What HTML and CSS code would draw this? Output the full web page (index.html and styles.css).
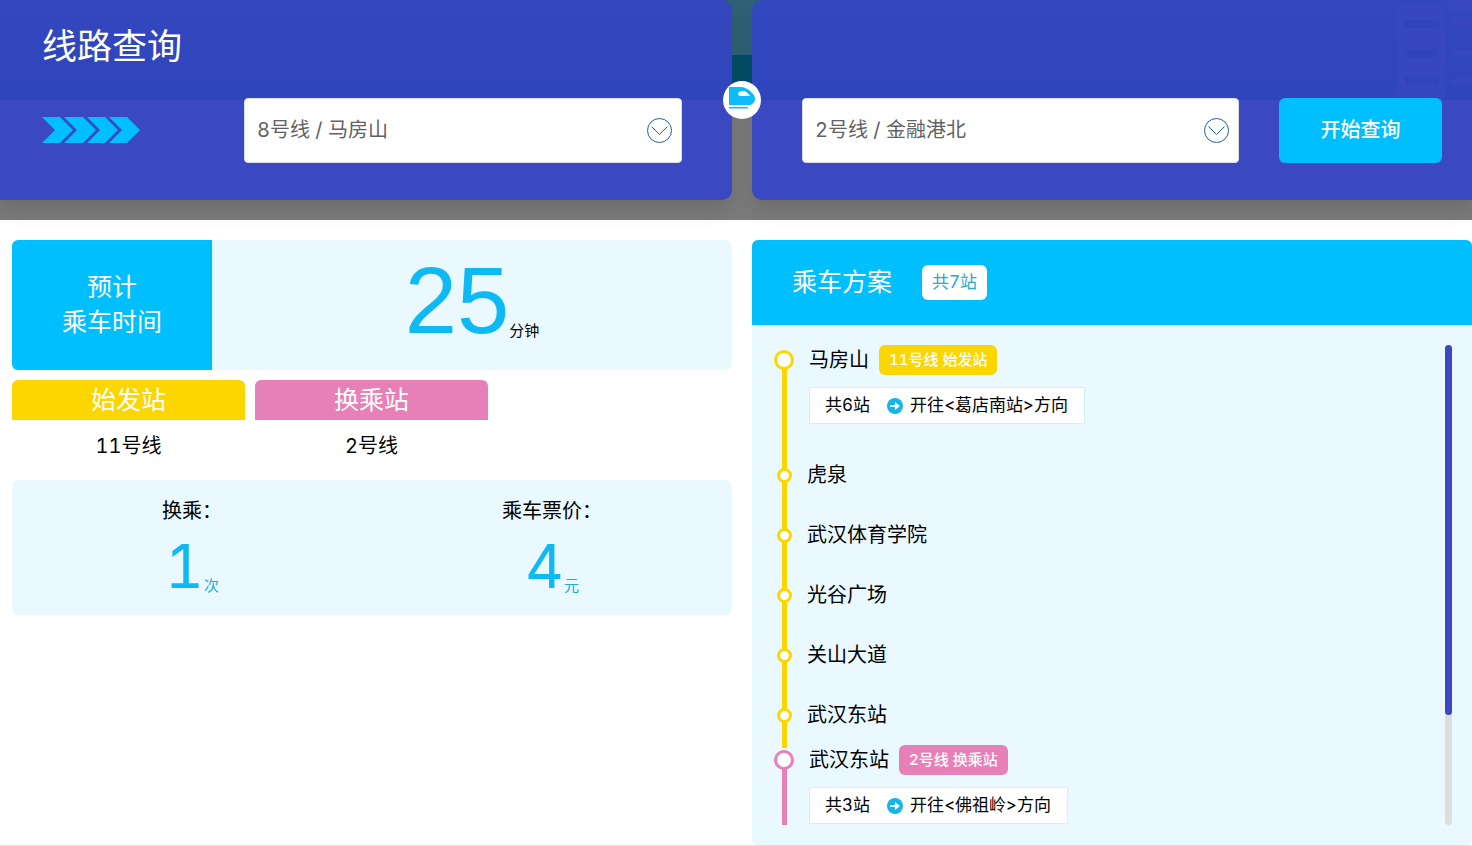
FILE: index.html
```html
<!DOCTYPE html>
<html lang="zh-CN">

<head>
    <meta charset="UTF-8">
    <meta name="viewport" content="width=device-width, initial-scale=1.0">
    <title>线路查询</title>
    <link rel="stylesheet" href="styles.css">
</head>

<body>
    <form class="query">
        <div class="query-panel query-from">
            <h1>线路查询</h1>
            <div class="query-row">
                <svg class="arrows" viewBox="0 0 98 27" aria-hidden="true">
                    <path d="M0 0h18l13 13-13 13H0l13-13zM22 0h19l13 13-13 13H22l13-13zM45 0h18l13 13-13 13H45l13-13zM67 0h18l13 13-13 13H67l13-13z" />
                </svg>
                <div class="station">
                    <select id="from" aria-label="起点站">
                        <option>8号线 / 马房山</option>
                    </select>
                    <svg class="chevron" viewBox="0 0 25 25" aria-hidden="true">
                        <circle cx="12.500" cy="12.500" r="12" />
                        <path d="M4.500 8.500l8 8 8-8" />
                    </svg>
                </div>
            </div>
        </div>
        <div class="query-panel query-to">
            <svg class="skyline" viewBox="0 0 75 100" aria-hidden="true">
                <path class="tower" d="M0 5h48v95H0zM52 0h23v12H52z" />
                <path class="window" d="M8 20h34v8H8zM8 49h34v8H8zM8 77h34v8H8z" />
                <path class="tower" d="M56 18h19v6H56zM56 50h19v6H56zM56 78h19v6H56z" />
            </svg>
            <span class="train">
                <svg viewBox="0 0 26 24" aria-hidden="true">
                    <path class="body" d="M0 1h12c6 0 14 7 14 11.500 0 4-3 6.500-6 6.500H0z" />
                    <path class="glass" d="M9 8c0-2 2-3 5-3 3 0 5 2 7 5h-9c-2 0-3-1-3-2z" />
                    <path class="body" d="M0 21h19v1.500H0z" />
                </svg>
            </span>
            <div class="query-row">
                <div class="station">
                    <select id="to" aria-label="终点站">
                        <option>2号线 / 金融港北</option>
                    </select>
                    <svg class="chevron" viewBox="0 0 25 25" aria-hidden="true">
                        <circle cx="12.500" cy="12.500" r="12" />
                        <path d="M4.500 8.500l8 8 8-8" />
                    </svg>
                </div>
                <button type="button" class="search">开始查询</button>
            </div>
        </div>
    </form>

    <main class="result">
        <section class="summary">
            <div class="time">
                <h2>预计<br>乘车时间</h2>
                <p class="time-value"><span class="number">25</span><span class="unit">分钟</span></p>
            </div>
            <div class="lines">
                <div class="line">
                    <h3 class="start">始发站</h3>
                    <p>11号线</p>
                </div>
                <div class="line">
                    <h3 class="change">换乘站</h3>
                    <p>2号线</p>
                </div>
            </div>
            <div class="totals">
                <div class="total">
                    <h3>换乘：</h3>
                    <p><span class="number">1</span><span class="unit">次</span></p>
                </div>
                <div class="total">
                    <h3>乘车票价：</h3>
                    <p><span class="number">4</span><span class="unit">元</span></p>
                </div>
            </div>
        </section>

        <section class="plan">
            <header class="plan-head">
                <h2>乘车方案</h2>
                <span class="count">共7站</span>
            </header>
            <div class="plan-body">
                <div class="route">
                    <div class="segment segment-start">
                        <div class="stop stop-main">
                            <i class="dot"></i>
                            <span class="name">马房山</span>
                            <span class="tag">11号线 始发站</span>
                        </div>
                        <p class="direction">
                            <span>共6站</span>
                            <svg viewBox="0 0 16 16" aria-hidden="true">
                                <circle cx="8" cy="8" r="8" />
                                <path d="M3 7h5V4l5 4-5 4V9H3z" />
                            </svg>
                            <span>开往&lt;葛店南站&gt;方向</span>
                        </p>
                        <ul>
                            <li class="stop"><i class="dot"></i>虎泉</li>
                            <li class="stop"><i class="dot"></i>武汉体育学院</li>
                            <li class="stop"><i class="dot"></i>光谷广场</li>
                            <li class="stop"><i class="dot"></i>关山大道</li>
                            <li class="stop"><i class="dot"></i>武汉东站</li>
                        </ul>
                    </div>
                    <div class="segment segment-change">
                        <div class="stop stop-main">
                            <i class="dot"></i>
                            <span class="name">武汉东站</span>
                            <span class="tag">2号线 换乘站</span>
                        </div>
                        <p class="direction">
                            <span>共3站</span>
                            <svg viewBox="0 0 16 16" aria-hidden="true">
                                <circle cx="8" cy="8" r="8" />
                                <path d="M3 7h5V4l5 4-5 4V9H3z" />
                            </svg>
                            <span>开往&lt;佛祖岭&gt;方向</span>
                        </p>
                    </div>
                </div>
                <div class="scrollbar"><div class="thumb"></div></div>
            </div>
        </section>
    </main>
</body>

</html>
```
FILE: styles.css
```css
* {
    box-sizing: border-box;
}

body {
    margin: 0;
    background: #fff;
    color: #000;
    font-family: Inter, "Noto Sans CJK SC", sans-serif;
    font-size: 20px;
    font-variant-numeric: tabular-nums;
    line-height: 31px;
}

h1,
h2,
h3,
p,
ul {
    margin: 0;
    padding: 0;
    font-weight: normal;
    list-style: none;
}

/* search area */
.query {
    display: grid;
    grid-template-columns: 1fr 1fr;
    gap: 20px;
    padding: 0 0 20px 12px;
    background: linear-gradient(#2f6277 0, #2f6277 55px, #004f68 55px, #004f68 100px, #7b7b7b 100px);
}

.query-panel {
    position: relative;
    display: flex;
    flex-direction: column;
    height: 200px;
    background: linear-gradient(#3347bf 0, #2f45bb 100px, #3a49c1 100px);
    box-shadow: 0 10px 20px rgba(0, 0, 0, 0.12);
}

.query-from {
    margin-left: -12px;
    padding: 21px 50px 37px 42px;
    border-radius: 0 10px 10px 0;
}

.query-to {
    padding: 21px 30px 37px 50px;
    border-radius: 10px 0 0 10px;
}

.query h1 {
    color: #fff;
    font-size: 35px;
    line-height: 50px;
}

.query-row {
    display: flex;
    align-items: center;
    gap: 40px;
    margin-top: auto;
}

.arrows {
    width: 98px;
    height: 27px;
    margin-right: 64px;
    fill: #00bfff;
}

.station {
    position: relative;
    flex: 1;
}

.station select {
    display: block;
    width: 100%;
    height: 65px;
    padding: 0 50px 0 12px;
    border: 1px solid #dcdfe6;
    border-radius: 4px;
    background: #fff;
    color: #606266;
    font: inherit;
    appearance: none;
}

.chevron {
    position: absolute;
    top: 20px;
    right: 10px;
    width: 25px;
    height: 25px;
    fill: none;
    stroke: #1f6394;
    pointer-events: none;
}

.search {
    width: 163px;
    height: 65px;
    padding: 0;
    border: 0;
    border-radius: 6px;
    background: #00bfff;
    color: #fff;
    font: inherit;
    font-weight: 500;
    cursor: pointer;
}

.train {
    position: absolute;
    top: 81px;
    left: -29px;
    z-index: 1;
    display: flex;
    align-items: center;
    justify-content: center;
    width: 38px;
    height: 38px;
    padding-bottom: 4px;
    border-radius: 50%;
    background: #fff;
}

.train svg {
    width: 26px;
    height: 24px;
}

.train .body {
    fill: #0bbcf8;
}

.train .glass {
    fill: #fff;
}

.skyline {
    position: absolute;
    top: 0;
    right: 0;
    width: 75px;
    height: 100px;
    opacity: 0.6;
}

/* keep the fields above the skyline */
.query-to .query-row {
    z-index: 1;
}

.skyline .tower {
    fill: #3a49c1;
}

.skyline .window {
    fill: #2f45b8;
}

/* result area */
.result {
    display: grid;
    grid-template-columns: 1fr 1fr;
    gap: 20px;
    padding: 20px 0 0 12px;
    border-bottom: 1px solid #ddd;
}

.time {
    display: flex;
    height: 130px;
    border-radius: 6px;
    background: #e9f9ff;
    overflow: hidden;
}

.time h2 {
    width: 200px;
    padding-top: 30px;
    background: #00bfff;
    color: #fff;
    font-size: 25px;
    line-height: 35px;
    text-align: center;
}

.time-value {
    display: flex;
    flex: 1;
    align-items: flex-end;
    justify-content: center;
    padding-bottom: 29px;
}

.number {
    color: #0fb9f3;
}

.unit {
    font-size: 15px;
    line-height: 20px;
}

.time .number {
    font-family: "Liberation Sans", sans-serif;
    font-size: 94px;
    line-height: 80px;
}

.lines {
    display: flex;
    gap: 10px;
    margin-top: 10px;
}

.line {
    width: 233px;
    text-align: center;
}

.line h3 {
    border-radius: 6px 6px 0 0;
    color: #fff;
    font-size: 25px;
    line-height: 40px;
}

.line p {
    line-height: 52px;
}

.start {
    background: #fbd600;
}

.change {
    background: #e880b8;
}

.totals {
    display: flex;
    height: 135px;
    margin-top: 8px;
    padding-top: 11px;
    border-radius: 6px;
    background: #e9f9ff;
}

.total {
    flex: 1;
    text-align: center;
}

.total h3 {
    font-size: 20px;
    line-height: 40px;
}

.total p {
    display: flex;
    align-items: flex-end;
    justify-content: center;
    height: 65px;
}

.total .number {
    font-size: 60px;
    line-height: 60px;
}

.total .unit {
    color: #22aecb;
}

/* route plan */
.plan {
    border-radius: 6px;
    background: #e9f9ff;
    overflow: hidden;
}

.plan-head {
    display: flex;
    align-items: center;
    gap: 30px;
    height: 85px;
    padding: 0 40px;
    background: #00bfff;
}

.plan-head h2 {
    color: #fff;
    font-size: 25px;
    line-height: 35px;
}

.count {
    padding: 0 10px;
    border-radius: 6px;
    background: #fff;
    color: #22aecb;
    font-size: 17px;
    line-height: 35px;
}

.plan-body {
    display: flex;
    height: 520px;
    padding: 20px;
}

.route {
    flex: 1;
    overflow: hidden;
}

.segment {
    --line-color: #fbd600;
    background: linear-gradient(var(--line-color), var(--line-color)) 10px 15px / 5px 100% no-repeat;
}

.segment-start {
    height: 403px;
    margin-bottom: -3px;
}

.segment-change {
    --line-color: #e880b8;
    height: 80px;
}

.stop {
    display: flex;
    align-items: center;
    height: 60px;
    padding-left: 5px;
}

.dot {
    width: 15px;
    height: 15px;
    margin-right: 15px;
    border: 3px solid var(--line-color);
    border-radius: 50%;
    background: #fff;
}

.stop-main {
    height: 30px;
    padding-left: 2px;
}

.stop-main .dot {
    width: 20px;
    height: 20px;
}

.tag {
    margin-left: 10px;
    padding: 0 10px;
    border-radius: 6px;
    background: var(--line-color);
    color: #fff;
    font-size: 15px;
    font-weight: 500;
    line-height: 30px;
}

.direction {
    display: flex;
    align-items: center;
    width: max-content;
    height: 37px;
    margin: 12px 0 21px 37px;
    padding: 0 16px 0 15px;
    border: 1px solid #d5eff5;
    background: #fff;
    font-size: 17px;
}

.direction svg {
    width: 16px;
    height: 16px;
    margin: 0 7px 0 17px;
    fill: #16b4e8;
}

.direction path {
    fill: #fff;
}

.scrollbar {
    width: 7px;
    border-radius: 4px;
    background: #ddd;
}

.thumb {
    height: 370px;
    border-radius: 4px;
    background: #3a49c1;
}
```
